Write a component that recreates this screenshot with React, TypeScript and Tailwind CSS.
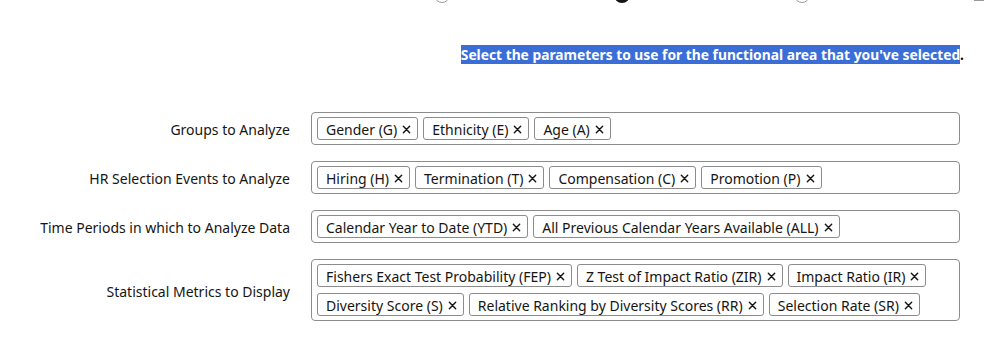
import React from 'react';

interface ParamRow {
    label: string;
    values: string[];
}

const rows: ParamRow[] = [
    { label: 'Groups to Analyze', values: ['Gender (G)', 'Ethnicity (E)', 'Age (A)'] },
    {
        label: 'HR Selection Events to Analyze',
        values: ['Hiring (H)', 'Termination (T)', 'Compensation (C)', 'Promotion (P)'],
    },
    {
        label: 'Time Periods in which to Analyze Data',
        values: ['Calendar Year to Date (YTD)', 'All Previous Calendar Years Available (ALL)'],
    },
    {
        label: 'Statistical Metrics to Display',
        values: [
            'Fishers Exact Test Probability (FEP)',
            'Z Test of Impact Ratio (ZIR)',
            'Impact Ratio (IR)',
            'Diversity Score (S)',
            'Relative Ranking by Diversity Scores (RR)',
            'Selection Rate (SR)',
        ],
    },
];

const RemoveIcon = () => (
    <svg width="9" height="9" viewBox="0 0 10 10" className="shrink-0">
        <path d="M1.5 1.5 L8.5 8.5 M8.5 1.5 L1.5 8.5" stroke="#161513" strokeWidth="1.6" strokeLinecap="round" />
    </svg>
);

const Chip = ({ text }: { text: string }) => (
    <span className="flex items-center gap-[5px] h-[23px] pl-[8px] pr-[6px] pt-[1px] border border-[#8c8c8c] rounded-[3px] bg-white text-[14px] text-[#161513] whitespace-nowrap">
        {text}
        <RemoveIcon />
    </span>
);

// step markers cut off at top of viewport
const Steps = () => (
    <div className="flex pl-[434px] gap-[164px] -mt-[13px] h-[17px]">
        <span className="w-[16px] h-[16px] rounded-full border border-[#9a9a9a] bg-white" />
        <span className="w-[16px] h-[16px] rounded-full bg-[#161513]" />
        <span className="w-[16px] h-[16px] rounded-full border border-[#9a9a9a] bg-white" />
        <span className="w-[10px] h-[2px] mt-[12px] bg-[#9a9a9a]" />
    </div>
);

const App = () => {
    return (
        <div className="flex flex-col w-[1002px] h-[353px] bg-white overflow-hidden" style={{ fontFamily: '"Noto Sans", sans-serif' }}>
            <Steps />

            <div className="flex justify-end pr-[38px] mt-[41px]">
                <p className="text-[13.8px] font-bold leading-[19px] text-[#161513]">
                    <span className="bg-[#3a6ed6] text-white">
                        Select the parameters to use for the functional area that you've selected
                    </span>
                    .
                </p>
            </div>

            <div className="flex flex-col gap-[16px] mt-[48px] pr-[42px]">
                {rows.map(row => (
                    <div key={row.label} className="flex items-center">
                        <label className="w-[290px] shrink-0 text-right text-[14px] text-[#161513] pt-[2px]">
                            {row.label}
                        </label>
                        <div className="ml-[21px] flex-1 flex flex-wrap gap-x-[5px] gap-y-[6px] p-[4px] pl-[5px] border border-[#8c8c8c] rounded-[4px] min-h-[33px]">
                            {row.values.map(v => (
                                <Chip key={v} text={v} />
                            ))}
                        </div>
                    </div>
                ))}
            </div>
        </div>
    );
};

export default App;
